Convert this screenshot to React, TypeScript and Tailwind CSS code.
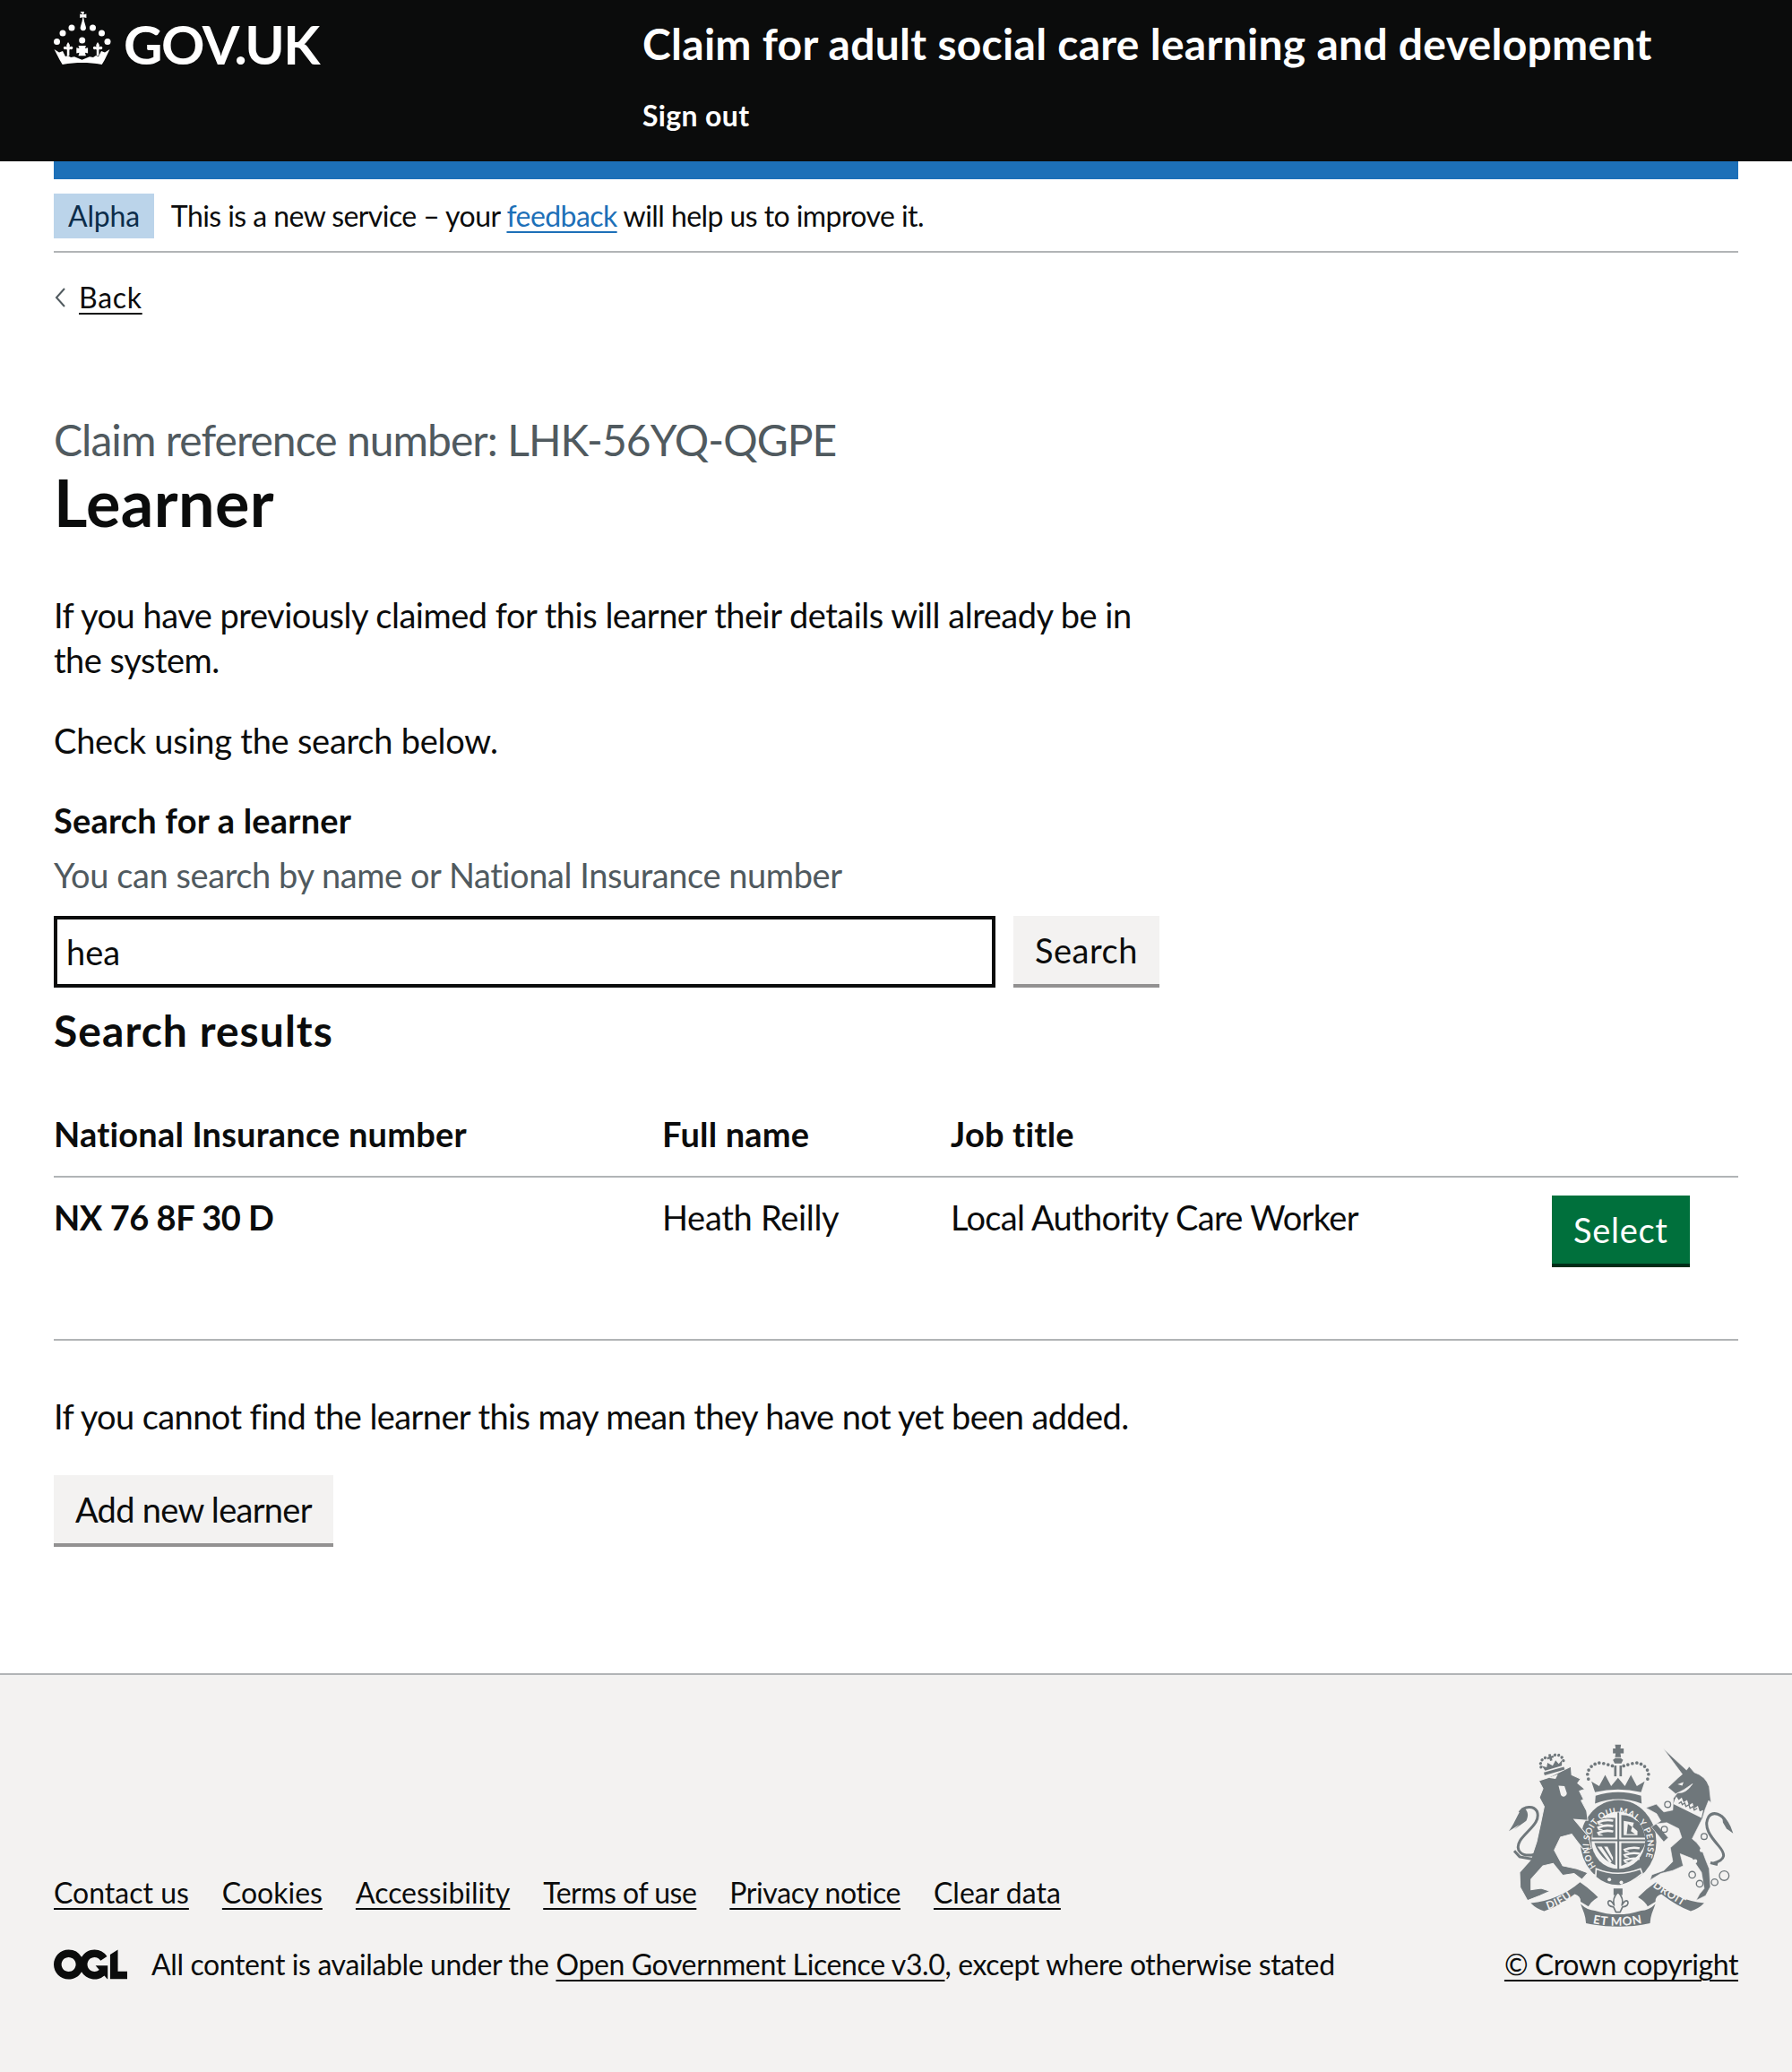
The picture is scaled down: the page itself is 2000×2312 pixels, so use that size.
function Crown() {
  return (
    <svg width="90" height="80" viewBox="0 0 90 80" className="absolute left-[50px] top-[5px]" fill="#fff">
      <path d="M39.5 8h4.500l-.8 3.200 3.200-.8v4.600l-3.200-.8.8 4.600 1.800 6.200a3.200 3.200 0 1 1-6 0l1.800-6.200.8-4.600-3.200.8v-4.600l3.200.8z" />
      <circle cx="30" cy="26" r="3.500" /><circle cx="53.500" cy="26" r="3.500" />
      <circle cx="20" cy="32" r="3.500" /><circle cx="63.500" cy="32" r="3.500" />
      <circle cx="13.500" cy="41.500" r="3.500" /><circle cx="70" cy="41.500" r="3.500" />
      <circle cx="41.700" cy="40" r="3.500" />
      <path d="M26 42c1.400 2 2.600 3.500 1.600 5.500 1-.8 3-1.300 3.600.2.6 1.800-1 3-2.800 2.400l-1 .3v6.600h-2.600v-6.600l-1-.3c-1.800.6-3.400-.6-2.800-2.400.6-1.500 2.600-1 3.600-.2-1-2 .2-3.500 1.400-5.500z" />
      <path d="M59 42c1.400 2 2.600 3.500 1.600 5.500 1-.8 3-1.300 3.600.2.6 1.800-1 3-2.800 2.400l-1 .3v6.600h-2.600v-6.600l-1-.3c-1.800.6-3.400-.6-2.800-2.400.6-1.500 2.600-1 3.600-.2-1-2 .2-3.500 1.400-5.500z" />
      <path d="M37.500 46h8.400l-1 3 3.200-.8v6.400l-3.200-.8 1 3.400h-8.400l1-3.400-3.200.8v-6.400l3.200.8z" />
      <path d="M10.500 50l5.500 3.500 4-1.500 3 6 3-1 3 2 4-.8 8.500 3.500 8.500-3.500 4 .8 3-2 3 1 3-6 4 1.500 5.500-3.500-5.800 12c-1 1.500-2 3.500-3 5-8-1.500-15-2-22-2s-14 .5-22 2c-1-1.500-2-3.500-3-5z" />
    </svg>
  );
}

function Arms() {
  const c = "#6f777b";
  const bg = "#f3f2f1";
  return (
    <svg width="257" height="207" viewBox="120 80 770 620" fill={c} className="block">
      <defs>
        <path id="garter" d="M424 492 A98 106 0 1 1 572 492" />
        <path id="ribL" d="M262 636 Q320 618 368 574" />
        <path id="ribR" d="M612 560 Q670 600 735 638" />
        <path id="ribC" d="M412 682 Q497 700 585 680" />
      </defs>
      <path d="M480 98h9l-2-13h20l-2 13h11v16h-11l2 13h-20l2-13h-9z" />
      <path d="M488 130h18l8 6-6 12h-22l-6-12z" />
      <rect x="484" y="155" width="8" height="36" /><rect x="502" y="155" width="8" height="36" />
      {[[398,200],[395,184],[399,170],[408,158],[420,150],[434,146],[449,148],[464,152],[478,156],[516,156],[530,152],[545,148],[560,146],[574,150],[586,158],[595,170],[599,184],[596,200]].map(([x,y],i)=>(<circle key={i} cx={x} cy={y} r="5.500" />))}
      <path d="M408 208l26 16 20-38 20 38 23-28 23 28 20-38 20 38 26-16-12 36q-77-18-154 0z" />
      <path d="M422 256q75-24 152 0l2 26q-78-30-156 0z" />
      <ellipse cx="498" cy="410" rx="127" ry="140" />
      <ellipse cx="498" cy="405" rx="90" ry="96" fill={bg} />
      <path d="M495 312h6v190h-6zM408 402h180v6H408z" />
      <path d="M418 330h70v66h-76q-2-36 6-66zM508 320q40 0 64 30 12 20 16 46h-80zM418 414h70v74q-52-20-70-74zM508 414h80q-14 50-80 76z" />
      {[334,352,370].map(y=>(<path key={y} fill={bg} d={`M426 ${y+8}q26-14 56-6l-2 7q-24-5-46 4 10 2 14 6h-16z`} />))}
      {[428,446,464].map(y=>(<path key={y} fill={bg} d={`M514 ${y+6}q26-12 56-6l-2 7q-24-5-46 4 10 2 14 6h-16z`} />))}
      <path fill={bg} d="M516 340l34 6-4 14 16 14v14h-46z" />
      <path d="M530 350l14 10-4 14 14 10h-28z" />
      <path fill={bg} d="M428 426h14l34 50-6 6zM450 426h12l18 36v12z" />
      <path d="M424 500 Q495 530 572 500 L578 516 Q540 548 506 556 Q460 560 422 528Z" stroke={bg} strokeWidth="5" />
      <circle cx="468" cy="536" r="6" fill={bg} /><circle cx="508" cy="546" r="6" fill={bg} />
      <path stroke={bg} strokeWidth="3" d="M232 206 L262 196 L340 158 L342 186 L372 200 L362 214 L386 234 L368 240 L382 268 L374 272 L392 306 L396 338 L350 335 L398 392 L408 432 L385 440 L360 408 L342 384 L305 394 L284 438 L312 490 L360 500 L396 514 L376 536 L350 516 L312 522 L280 482 L246 490 L206 535 L206 570 L240 565 L270 575 L236 590 L194 606 L170 562 L168 512 L205 470 L225 410 L238 350 L250 292 L234 262 L246 232 Z" />
      <path d="M218 452 C175 462 150 440 170 405 C195 370 240 345 226 308 C214 288 184 290 168 312 M150 440 L168 460 L212 468" fill="none" stroke={c} strokeWidth="9" />
      <path d="M176 296 C160 320 150 350 132 374 L168 352 L150 368 L190 340 C200 320 196 300 176 296Z" />
      <path d="M264 196l32-12-8 16zM298 222l20 2 8 24a11 11 0 0 1-20 6z" fill={bg} />
      <g transform="rotate(-16 275 150)">
        <path d="M242 170 L312 170 L312 180 L242 180 Z" />
        <path d="M248 165l-6-18 14 9 7-14 14 14 14-14 7 14 14-9-6 18z" />
        <path d="M273 116h8v8h7v7h-7v8h-8v-8h-7v-7h7z" />
        {[[238,150],[240,138],[248,128],[260,124],[294,124],[306,128],[314,138],[316,150]].map(([x,y],i)=>(<circle key={i} cx={x} cy={y} r="5" />))}
      </g>
      <path d="M205 615 Q300 605 370 545 Q400 565 430 595 Q405 610 398 626 L372 610 Q372 590 352 585 Q300 625 250 642 Q225 635 205 615Z" />
      <path d="M785 615 Q694 605 624 545 Q594 565 564 595 Q589 610 596 626 L622 610 Q622 590 642 585 Q694 625 740 642 Q765 635 785 615Z" />
      <path d="M372 618 Q395 640 420 640 Q497 665 574 640 Q600 640 622 618 L610 650 Q605 665 604 682 Q497 705 390 682 Q389 665 384 650Z" />
      <rect x="482" y="566" width="30" height="22" />
      <path fill={bg} stroke={c} strokeWidth="5" strokeLinejoin="round" d="M497 578 Q518 600 510 622 Q522 600 530 610 Q534 625 512 628 L504 645 H490 L482 628 Q460 625 464 610 Q472 600 484 622 Q476 600 497 578Z" />
      <path stroke={bg} strokeWidth="2" d="M648 98 L726 170 L735 158 L752 178 Q790 190 802 226 L808 280 L800 272 L788 302 L780 330 L745 400 Q775 420 790 470 L802 500 L806 560 L790 590 L758 606 L770 584 L785 566 L776 512 L745 466 L705 450 L715 490 L680 506 L640 516 L604 538 L610 520 L650 506 L680 476 L672 430 L710 396 L700 366 L660 346 L625 350 L665 396 L650 410 L608 360 L640 340 L626 316 L590 296 L625 284 L650 310 L680 304 L682 264 L696 246 Q724 250 746 216 Q720 236 690 250 L664 228 L660 232 L698 196 L712 184 Z" />
      <path d="M686 270 L692 258 L700 270 L710 262 L716 278 L728 270 L734 288 L746 280 L752 298 L764 290 L770 308 L782 304 L776 330 L682 284 Z" fill={bg} />
      <path d="M700 282l8-6 4 10 8-6 4 12 10-6 4 12 10-6 4 12 10-6" fill="none" stroke={c} strokeWidth="4" />
      <path d="M815 482 C860 470 856 450 834 424 C808 394 780 360 800 326 C815 306 845 316 860 346 M806 480 L830 486" fill="none" stroke={c} strokeWidth="9" />
      <path d="M845 320 Q870 340 882 382 L860 366 L848 346Z" />
      <g fill="none" stroke={c} strokeWidth="4">
        <circle cx="745" cy="520" r="11" /><circle cx="770" cy="550" r="11" /><circle cx="820" cy="545" r="11" /><circle cx="852" cy="523" r="16" />
      </g>
      <g fill={bg} stroke={c} strokeWidth="4">
        <circle cx="663" cy="285" r="10" /><circle cx="652" cy="368" r="10" /><circle cx="785" cy="392" r="10" />
      </g>
      <circle cx="777" cy="438" r="7" fill={bg} /><circle cx="755" cy="475" r="7" fill={bg} />
      <path d="M696 218l20-8-4 12z" fill={bg} />
      <g fill={bg} fontFamily="Lato, sans-serif" fontWeight="700" fontSize="29">
        <text letterSpacing="1.500"><textPath href="#garter">HONI SOIT QUI MAL Y PENSE</textPath></text>
      </g>
      <g fill={bg} fontFamily="Lato, sans-serif" fontWeight="700" fontSize="36" letterSpacing="2">
        <text><textPath href="#ribL">DIEU</textPath></text>
        <text><textPath href="#ribR">DROIT</textPath></text>
        <text fontSize="40"><textPath href="#ribC">ET MON</textPath></text>
      </g>
    </svg>
  );
}

const ulink = "underline underline-offset-[5px] decoration-2";

export default function App() {
  return (
    <div className="relative font-['Lato',sans-serif] text-[#0b0c0c] text-[38px] leading-[50px] bg-white min-h-[2312px]">
      <Crown />
      <header className="h-[180px] bg-[#0b0c0c] text-white flex pl-[138px]">
        <div className="w-[579px] font-bold text-[60px] leading-[98px] tracking-[-1.5px]">GOV.UK</div>
        <div>
          <div className="font-bold text-[48px] leading-[98px] tracking-[0.28px]">Claim for adult social care learning and development</div>
          <div className="font-bold text-[32px] leading-[62px] tracking-[0.35px]">Sign out</div>
        </div>
      </header>
      <main className="px-[60px]">
        <div className="h-[20px] bg-[#1d70b8]" />
        <div className="h-[82px] border-b-2 border-[#b1b4b6] pt-[16px] flex gap-[19px] text-[32px]">
          <span className="h-[50px] px-[16px] bg-[#bbd4ea] text-[#0c2d4a] tracking-[-0.2px]">Alpha</span>
          <span className="tracking-[-0.57px]">This is a new service – your <a className={ulink + " text-[#1d70b8]"}>feedback</a> will help us to improve it.</span>
        </div>
        <div className="mt-[25px] h-[50px] flex items-center gap-[14px] text-[32px] tracking-[0.7px]">
          <svg width="14" height="24" viewBox="0 0 14 24" fill="none" stroke="#505a5f" strokeWidth="2"><path d="M12 2 3 12l9 10" /></svg>
          <a className={ulink}>Back</a>
        </div>
        <div className="mt-[104px] text-[48px] leading-[60px] text-[#505a5f] tracking-[-0.96px]">Claim reference number: LHK-56YQ-QGPE</div>
        <h1 className="text-[72px] leading-[78px] font-bold tracking-[0.4px]">Learner</h1>
        <p className="mt-[62px] w-[1250px] tracking-[-0.5px]">If you have previously claimed for this learner their details will already be in the system.</p>
        <p className="mt-[40px] tracking-[-0.25px]">Check using the search below.</p>
        <div className="mt-[39px] font-bold tracking-[0.2px]">Search for a learner</div>
        <div className="mt-[11px] text-[#505a5f] tracking-[-0.43px]">You can search by name or National Insurance number</div>
        <div className="mt-[21px] flex gap-[20px]">
          <input readOnly defaultValue="hea" className="w-[1051px] h-[80px] border-4 border-[#0b0c0c] px-[10px] outline-none" />
          <button className="h-[76px] mb-[4px] px-[24px] bg-[#f3f2f1] shadow-[0_4px_0_#929191] tracking-[0.5px]">Search</button>
        </div>
        <h2 className="mt-[18px] text-[48px] leading-[60px] font-bold tracking-[1.05px]">Search results</h2>
        <table className="mt-[60px] w-full border-collapse text-left">
          <thead>
            <tr className="border-b-2 border-[#b1b4b6]">
              <th className="w-[679px] pb-[22px] font-bold tracking-[0.18px]">National Insurance number</th>
              <th className="w-[322px] pb-[22px] font-bold tracking-[0.2px]">Full name</th>
              <th className="w-[671px] pb-[22px] font-bold tracking-[0.2px]">Job title</th>
              <th className="pb-[22px]"></th>
            </tr>
          </thead>
          <tbody>
            <tr className="border-b-2 border-[#b1b4b6]">
              <td className="pt-[19px] pb-[80px] align-top font-bold tracking-[-0.45px]">NX 76 8F 30 D</td>
              <td className="pt-[19px] pb-[80px] align-top tracking-[-0.3px]">Heath Reilly</td>
              <td className="pt-[19px] pb-[80px] align-top tracking-[-0.68px]">Local Authority Care Worker</td>
              <td className="pt-[20px] pb-[84px] align-top">
                <button className="h-[76px] px-[24px] block bg-[#00703c] text-white shadow-[0_4px_0_#002d18] tracking-[0.7px]">Select</button>
              </td>
            </tr>
          </tbody>
        </table>
        <p className="mt-[59px] tracking-[-0.6px]">If you cannot find the learner this may mean they have not yet been added.</p>
        <div className="mt-[41px]">
          <button className="h-[76px] mb-[4px] px-[24px] bg-[#f3f2f1] shadow-[0_4px_0_#929191] tracking-[-0.7px]">Add new learner</button>
        </div>
      </main>
      <footer className="mt-[141px] h-[445px] bg-[#f3f2f1] border-t-2 border-[#b1b4b6] px-[60px] pb-[95px] flex items-end justify-between text-[32px]">
        <div>
          <div className="flex gap-[37px]">
            <a className={ulink}>Contact us</a>
            <a className={ulink}>Cookies</a>
            <a className={ulink}>Accessibility</a>
            <a className={ulink + " tracking-[-0.5px]"}>Terms of use</a>
            <a className={ulink + " tracking-[-0.4px]"}>Privacy notice</a>
            <a className={ulink}>Clear data</a>
          </div>
          <div className="mt-[30px] flex items-center gap-[27px]">
            <svg width="82" height="34" viewBox="0 0 483.2 195.7" fill="#0b0c0c"><path d="M421.5 142.8V.1l-50.7 32.3v161.1h112.4v-50.7zm-122.3-9.6A47.12 47.12 0 0 1 221 97.8c0-26 21.1-47.1 47.1-47.1 16.7 0 31.4 8.7 39.7 21.8l42.7-27.2A97.63 97.63 0 0 0 268.1 0c-36.5 0-68.3 20.1-85.1 49.7A98 98 0 0 0 97.8 0C43.9 0 0 43.9 0 97.8s43.9 97.8 97.8 97.8c36.5 0 68.3-20.1 85.1-49.7a97.76 97.76 0 0 0 149.6 25.4l19.4 22.2h3v-87.8h-80l24.3 27.5zM97.8 145c-26 0-47.1-21.1-47.1-47.1s21.1-47.1 47.1-47.1 47.2 21 47.2 47S123.8 145 97.8 145" /></svg>
            <span className="tracking-[-0.37px]">All content is available under the <a className={ulink}>Open Government Licence v3.0</a>, except where otherwise stated</span>
          </div>
        </div>
        <div className="flex flex-col items-end">
          <div className="mr-[3px] mb-[15px]"><Arms /></div>
          <a className={ulink + " tracking-[-0.43px]"}>© Crown copyright</a>
        </div>
      </footer>
    </div>
  );
}
